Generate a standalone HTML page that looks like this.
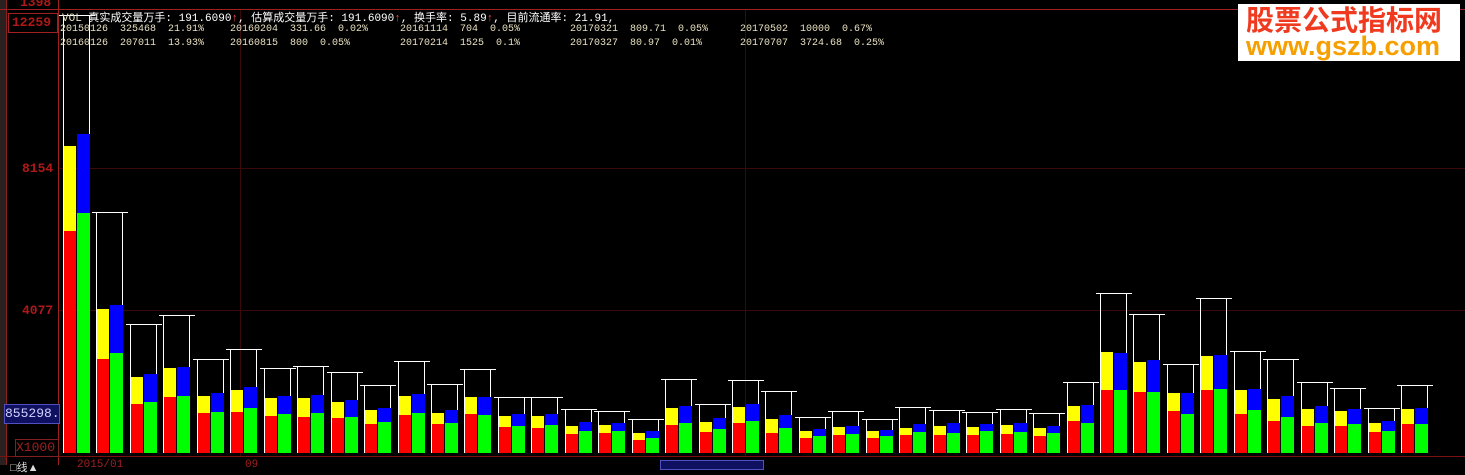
<!DOCTYPE html>
<html><head><meta charset="utf-8"><style>
body{margin:0;width:1465px;height:465px;background:#000;overflow:hidden;position:relative;font-family:"Liberation Sans","Noto Sans CJK SC",sans-serif}
.a{position:absolute}
.lbl{position:absolute;color:#b01818;font:bold 13px "Liberation Mono",monospace;right:1410px}
.t{position:absolute;color:#e8e0c0;font:11px "Liberation Mono","Noto Sans CJK SC",monospace;white-space:pre}
.r{position:absolute;color:#e8e0c0;font:10px "Liberation Mono",monospace;white-space:pre}
</style></head><body>
<div class="a" style="left:0;top:0;width:6px;height:465px;background:#2a2020;border-right:1px solid #8a2020"></div>
<div class="a" style="left:58px;top:0;width:1px;height:465px;background:#a02020"></div>
<div class="a" style="left:0;top:9px;width:1465px;height:1px;background:#a02020"></div>
<div class="a" style="left:0;top:456px;width:1465px;height:1px;background:#7a1010"></div>
<div class="a" style="left:59px;top:168px;width:1406px;height:1px;background:#3a0a0a"></div>
<div class="a" style="left:59px;top:310px;width:1406px;height:1px;background:#3a0a0a"></div>
<div class="a" style="left:240px;top:10px;width:1px;height:446px;background:#3a0a0a"></div>
<div class="a" style="left:745px;top:10px;width:1px;height:446px;background:#3a0a0a"></div>
<div class="lbl" style="left:20px;top:-5px">1398</div>
<div class="a" style="left:8px;top:13px;width:48px;height:18px;border:1px solid #a02020"></div>
<div class="lbl" style="left:12px;top:15px">12259</div>
<div class="lbl" style="left:22px;top:161px">8154</div>
<div class="lbl" style="left:22px;top:303px">4077</div>
<div class="a" style="left:4px;top:404px;width:54px;height:18px;background:#101060;border:1px solid #5050c0;color:#d0d0ff;font:13px 'Liberation Mono',monospace;line-height:18px">855298.</div>
<div class="a" style="left:15px;top:439px;width:42px;height:16px;border:1px solid #802020;color:#a02020;font:13px 'Liberation Mono',monospace;line-height:16px">X1000</div>
<div class="a" style="left:10px;top:459px;color:#ddd;font:11px 'Liberation Sans','Noto Sans CJK SC',sans-serif">□线▲</div>
<div class="a" style="left:77px;top:459px;color:#a02020;font:11px 'Liberation Mono',monospace">2015/01</div>
<div class="a" style="left:245px;top:459px;color:#a02020;font:11px 'Liberation Mono',monospace">09</div>
<div class="a" style="left:660px;top:460px;width:102px;height:8px;background:#101060;border:1px solid #5050c0"></div>
<div id="bars"></div>
<div class="t" style="left:62px;top:9px">VOL <span style="color:#fff">真实成交量万手: 191.6090</span><span style="color:#f44">↑</span><span style="color:#fff">, 估算成交量万手: 191.6090</span><span style="color:#f44">↑</span><span style="color:#fff">, 换手率: 5.89</span><span style="color:#f44">↑</span><span style="color:#fff">, 目前流通率: 21.91,</span></div>
<div class="r" style="left:60px;top:24px">20150126  325468  21.91%</div>
<div class="r" style="left:230px;top:24px">20160204  331.66  0.02%</div>
<div class="r" style="left:400px;top:24px">20161114  704  0.05%</div>
<div class="r" style="left:570px;top:24px">20170321  809.71  0.05%</div>
<div class="r" style="left:740px;top:24px">20170502  10000  0.67%</div>
<div class="r" style="left:60px;top:38px">20160126  207011  13.93%</div>
<div class="r" style="left:230px;top:38px">20160815  800  0.05%</div>
<div class="r" style="left:400px;top:38px">20170214  1525  0.1%</div>
<div class="r" style="left:570px;top:38px">20170327  80.97  0.01%</div>
<div class="r" style="left:740px;top:38px">20170707  3724.68  0.25%</div>
<div class="a" style="left:1238px;top:4px;width:222px;height:57px;background:#fff"></div>
<div class="a" style="left:1246px;top:2px;color:#f03a20;font:bold 28px 'Noto Sans CJK SC',sans-serif;line-height:34px;letter-spacing:0px">股票公式指标网</div>
<div class="a" style="left:1246px;top:31px;color:#f5a000;font:bold 27px 'Liberation Sans',sans-serif;line-height:30px">www.gszb.com</div>
<script>
var d=[[15,146,231,134,213],[212,309,359,305,353],[324,377,404,374,402],[315,368,397,367,396],[359,396,413,393,412],[349,390,412,387,408],[368,398,416,396,414],[366,398,417,395,413],[372,402,418,400,417],[385,410,424,408,422],[361,396,415,394,413],[384,413,424,410,423],[369,397,414,397,415],[397,416,427,414,426],[397,416,428,414,425],[409,426,434,422,431],[411,425,433,423,431],[419,433,440,431,438],[379,408,425,406,423],[404,422,432,418,429],[380,407,423,404,421],[391,419,433,415,428],[417,431,438,429,436],[411,427,435,426,434],[419,431,438,430,436],[407,428,435,424,432],[410,426,435,423,433],[412,427,435,424,431],[409,425,434,423,432],[413,428,436,426,433],[382,406,421,405,423],[293,352,390,353,390],[314,362,392,360,392],[364,393,411,393,414],[298,356,390,355,389],[351,390,414,389,410],[359,399,421,396,417],[382,409,426,406,423],[388,411,426,409,424],[408,423,432,421,431],[385,409,424,408,424]];
var B=453,h='';
function r(x,y,w,hh,c){return '<div class="a" style="left:'+x+'px;top:'+y+'px;width:'+w+'px;height:'+hh+'px;background:'+c+'"></div>';}
d.forEach(function(g,i){var x=Math.round(63+i*33.45);
h+=r(x,g[1],13,g[2]-g[1],'#ffff00')+r(x,g[2],13,B-g[2],'#ff0000')+r(x+14,g[3],13,g[4]-g[3],'#0000ff')+r(x+14,g[4],13,B-g[4],'#00ff00');
h+=r(x-4,g[0],36,1,'#fff')+r(x,g[0],1,B-g[0],'#fff')+r(x+26,g[0],1,g[3]-g[0],'#fff');});
document.getElementById('bars').innerHTML=h;
</script>
</body></html>
